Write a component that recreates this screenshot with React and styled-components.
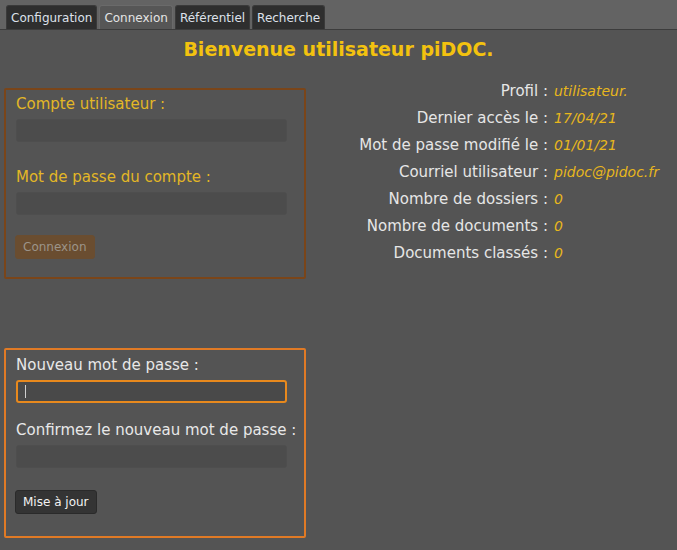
import React from 'react';
import styled, { createGlobalStyle } from 'styled-components';

const GlobalStyle = createGlobalStyle`
  html, body {
    margin: 0;
    padding: 0;
    background: #545454;
    font-family: "DejaVu Sans", Verdana, sans-serif;
  }
`;

const infos = [
  { label: 'Profil :', value: 'utilisateur.' },
  { label: 'Dernier accès le :', value: '17/04/21' },
  { label: 'Mot de passe modifié le :', value: '01/01/21' },
  { label: 'Courriel utilisateur :', value: 'pidoc@pidoc.fr' },
  { label: 'Nombre de dossiers :', value: '0' },
  { label: 'Nombre de documents :', value: '0' },
  { label: 'Documents classés :', value: '0' },
];

const tabs = ['Configuration', 'Connexion', 'Référentiel', 'Recherche'];

const App = () => {
  return (
    <Page>
      <GlobalStyle />
      {/* Tab bar */}
      <TabBar>
        {tabs.map((t) => (
          <Tab key={t} active={t === 'Connexion'}>{t}</Tab>
        ))}
      </TabBar>

      <Title>Bienvenue utilisateur piDOC.</Title>

      <Content>
        <LeftColumn>
          {/* Login box */}
          <Box tone="login">
            <Label tone="login">Compte utilisateur :</Label>
            <Input />
            <Label tone="login" gap={24}>Mot de passe du compte :</Label>
            <Input type="password" />
            <Button tone="login" gap={20}>Connexion</Button>
          </Box>

          {/* Password change box */}
          <Box tone="update">
            <Label>Nouveau mot de passe :</Label>
            <FocusField>
              <Input type="password" focused />
              <Caret />
            </FocusField>
            <Label gap={16}>Confirmez le nouveau mot de passe :</Label>
            <Input type="password" />
            <Button gap={22}>Mise à jour</Button>
          </Box>
        </LeftColumn>

        <InfoGrid>
          {infos.map((info) => (
            <React.Fragment key={info.label}>
              <InfoLabel>{info.label}</InfoLabel>
              <InfoValue>{info.value}</InfoValue>
            </React.Fragment>
          ))}
        </InfoGrid>
      </Content>
    </Page>
  );
};

const Page = styled.div`
  width: 677px;
  height: 550px;
  background: #545454;
  overflow: hidden;
`;

const TabBar = styled.div`
  display: flex;
  align-items: flex-end;
  gap: 2px;
  height: 29px;
  padding-left: 6px;
  background: #636363;
  border-bottom: 1px solid #3c3c3c;
  box-sizing: content-box;
`;

const Tab = styled.div`
  height: 24px;
  padding: 0 4px;
  display: flex;
  align-items: center;
  font-size: 12px;
  color: ${(p) => (p.active ? '#e4e4e4' : '#dde1ea')};
  background: ${(p) => (p.active ? '#565656' : '#2e2e2e')};
  border: 1px solid ${(p) => (p.active ? '#6a6a6a' : '#3a3a3a')};
  border-bottom: none;
  border-radius: 3px 3px 0 0;
  box-sizing: border-box;
`;

const Title = styled.h1`
  margin: 0;
  height: 38px;
  display: flex;
  align-items: center;
  justify-content: center;
  font-size: 19px;
  font-weight: bold;
  color: #f3c20f;
`;

const Content = styled.div`
  display: flex;
  padding-top: 20px;
`;

const LeftColumn = styled.div`
  display: flex;
  flex-direction: column;
  gap: 69px;
  margin-left: 4px;
  width: 302px;
`;

const Box = styled.div`
  box-sizing: border-box;
  height: ${(p) => (p.tone === 'login' ? '191px' : '190px')};
  border: ${(p) => (p.tone === 'login' ? '2px solid #7a4519' : '2px solid #e07a25')};
  border-radius: 2px;
  padding: ${(p) => (p.tone === 'login' ? '3px' : '4px')} 16px 0 10px;
  display: flex;
  flex-direction: column;
  align-items: flex-start;
`;

const Label = styled.div`
  font-size: 15px;
  line-height: 22px;
  margin-top: ${(p) => p.gap || 0}px;
  margin-bottom: 4px;
  color: ${(p) => (p.tone === 'login' ? '#e3b726' : '#e8e8e8')};
  white-space: nowrap;
`;

const FocusField = styled.div`
  position: relative;
  display: flex;
`;

const Caret = styled.span`
  position: absolute;
  left: 9px;
  top: 5px;
  width: 1px;
  height: 13px;
  background: #cfcfcf;
`;

const Input = styled.input`
  width: 271px;
  height: 23px;
  box-sizing: border-box;
  margin: 0;
  padding: 0 8px;
  border-radius: 3px;
  outline: none;
  background: ${(p) => (p.focused ? '#494949' : '#4c4c4c')};
  border: ${(p) => (p.focused ? '2px solid #e8891d' : '1px solid #4e4e4e')};
  color: #ddd;
  font-size: 13px;
`;

const Button = styled.button`
  margin-top: ${(p) => p.gap || 20}px;
  height: 24px;
  padding: 0 7px;
  font-family: "DejaVu Sans", Verdana, sans-serif;
  font-size: 12px;
  border-radius: 3px;
  cursor: pointer;
  background: ${(p) => (p.tone === 'login' ? '#6a4d30' : '#343434')};
  color: ${(p) => (p.tone === 'login' ? '#9c9489' : '#f2f2f2')};
  border: 1px solid ${(p) => (p.tone === 'login' ? '#6a4d30' : '#2a2a2a')};
  margin-left: -1px;
`;

const InfoGrid = styled.div`
  display: grid;
  grid-template-columns: 242px auto;
  column-gap: 6px;
  grid-auto-rows: 27px;
  align-content: start;
  margin-top: -10px;
  font-size: 15px;
`;

const InfoLabel = styled.div`
  text-align: right;
  color: #e6e6e6;
  line-height: 27px;
  white-space: nowrap;
`;

const InfoValue = styled.div`
  color: #e8b71c;
  font-style: italic;
  font-size: 14px;
  line-height: 27px;
  white-space: nowrap;
`;

export default App;
